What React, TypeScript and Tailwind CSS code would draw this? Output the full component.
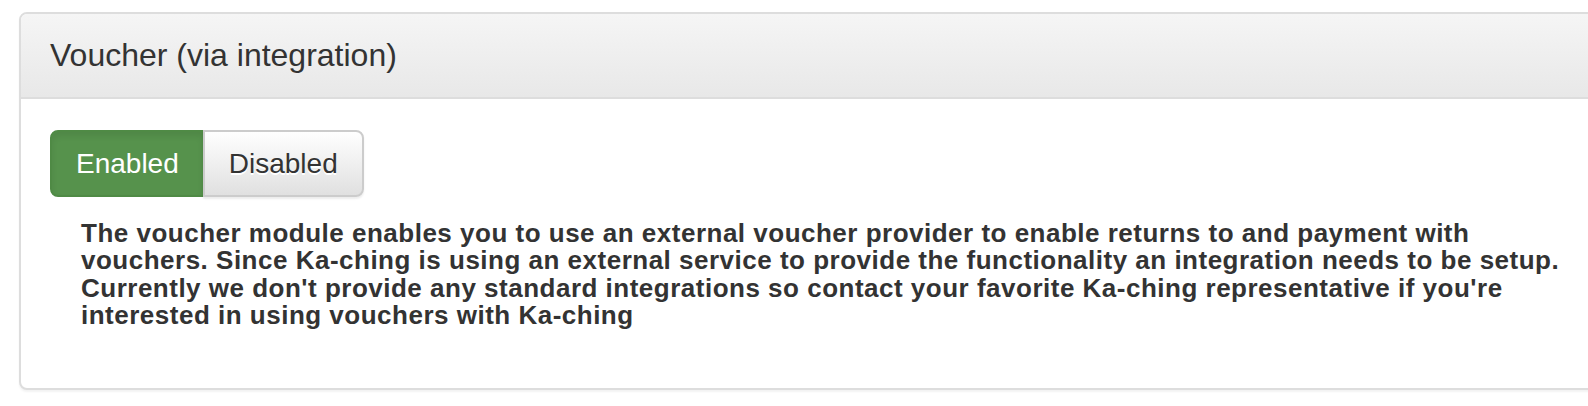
export default function App() {
  return (
    <div className="min-h-screen bg-white pt-[12px] pl-[19px] overflow-hidden" style={{ fontFamily: '"Liberation Sans", Arial, Helvetica, sans-serif' }}>
      <div className="w-[1620px] border-2 border-[#dddddd] rounded-[8px] shadow-[0_2px_2px_rgba(0,0,0,0.05)] bg-white">
        {/* heading */}
        <div className="h-[85px] flex items-center px-[29px] bg-gradient-to-b from-[#f5f5f5] to-[#e8e8e8] border-b-2 border-[#dddddd] rounded-t-[6px]">
          <h3 className="text-[32px] leading-[35px] text-[#333333]">Voucher (via integration)</h3>
        </div>

        {/* body */}
        <div className="pt-[31px] px-[29px] pb-[59px]">
          <div className="inline-flex">
            <button className="h-[67px] px-[24px] text-[28px] text-white bg-[#56924c] border-2 border-[#4f8a45] rounded-l-[8px] shadow-[inset_0_4px_6px_rgba(0,0,0,0.08)]">
              Enabled
            </button>
            <button className="h-[67px] -ml-[2px] px-[24px] text-[28px] text-[#333333] bg-gradient-to-b from-white to-[#e0e0e0] border-2 border-[#cccccc] rounded-r-[8px] shadow-[0_2px_2px_rgba(0,0,0,0.075)] [text-shadow:0_2px_0_#fff]">
              Disabled
            </button>
          </div>
          <p className="mt-[23px] pl-[31px] font-bold text-[26px] tracking-[0.5px] leading-[27.3px] text-[#333333] whitespace-nowrap">
            The voucher module enables you to use an external voucher provider to enable returns to and payment with
            <br />
            vouchers. Since Ka-ching is using an external service to provide the functionality an integration needs to be setup.
            <br />
            Currently we don't provide any standard integrations so contact your favorite Ka-ching representative if you're
            <br />
            interested in using vouchers with Ka-ching
          </p>
        </div>
      </div>
    </div>
  )
}
